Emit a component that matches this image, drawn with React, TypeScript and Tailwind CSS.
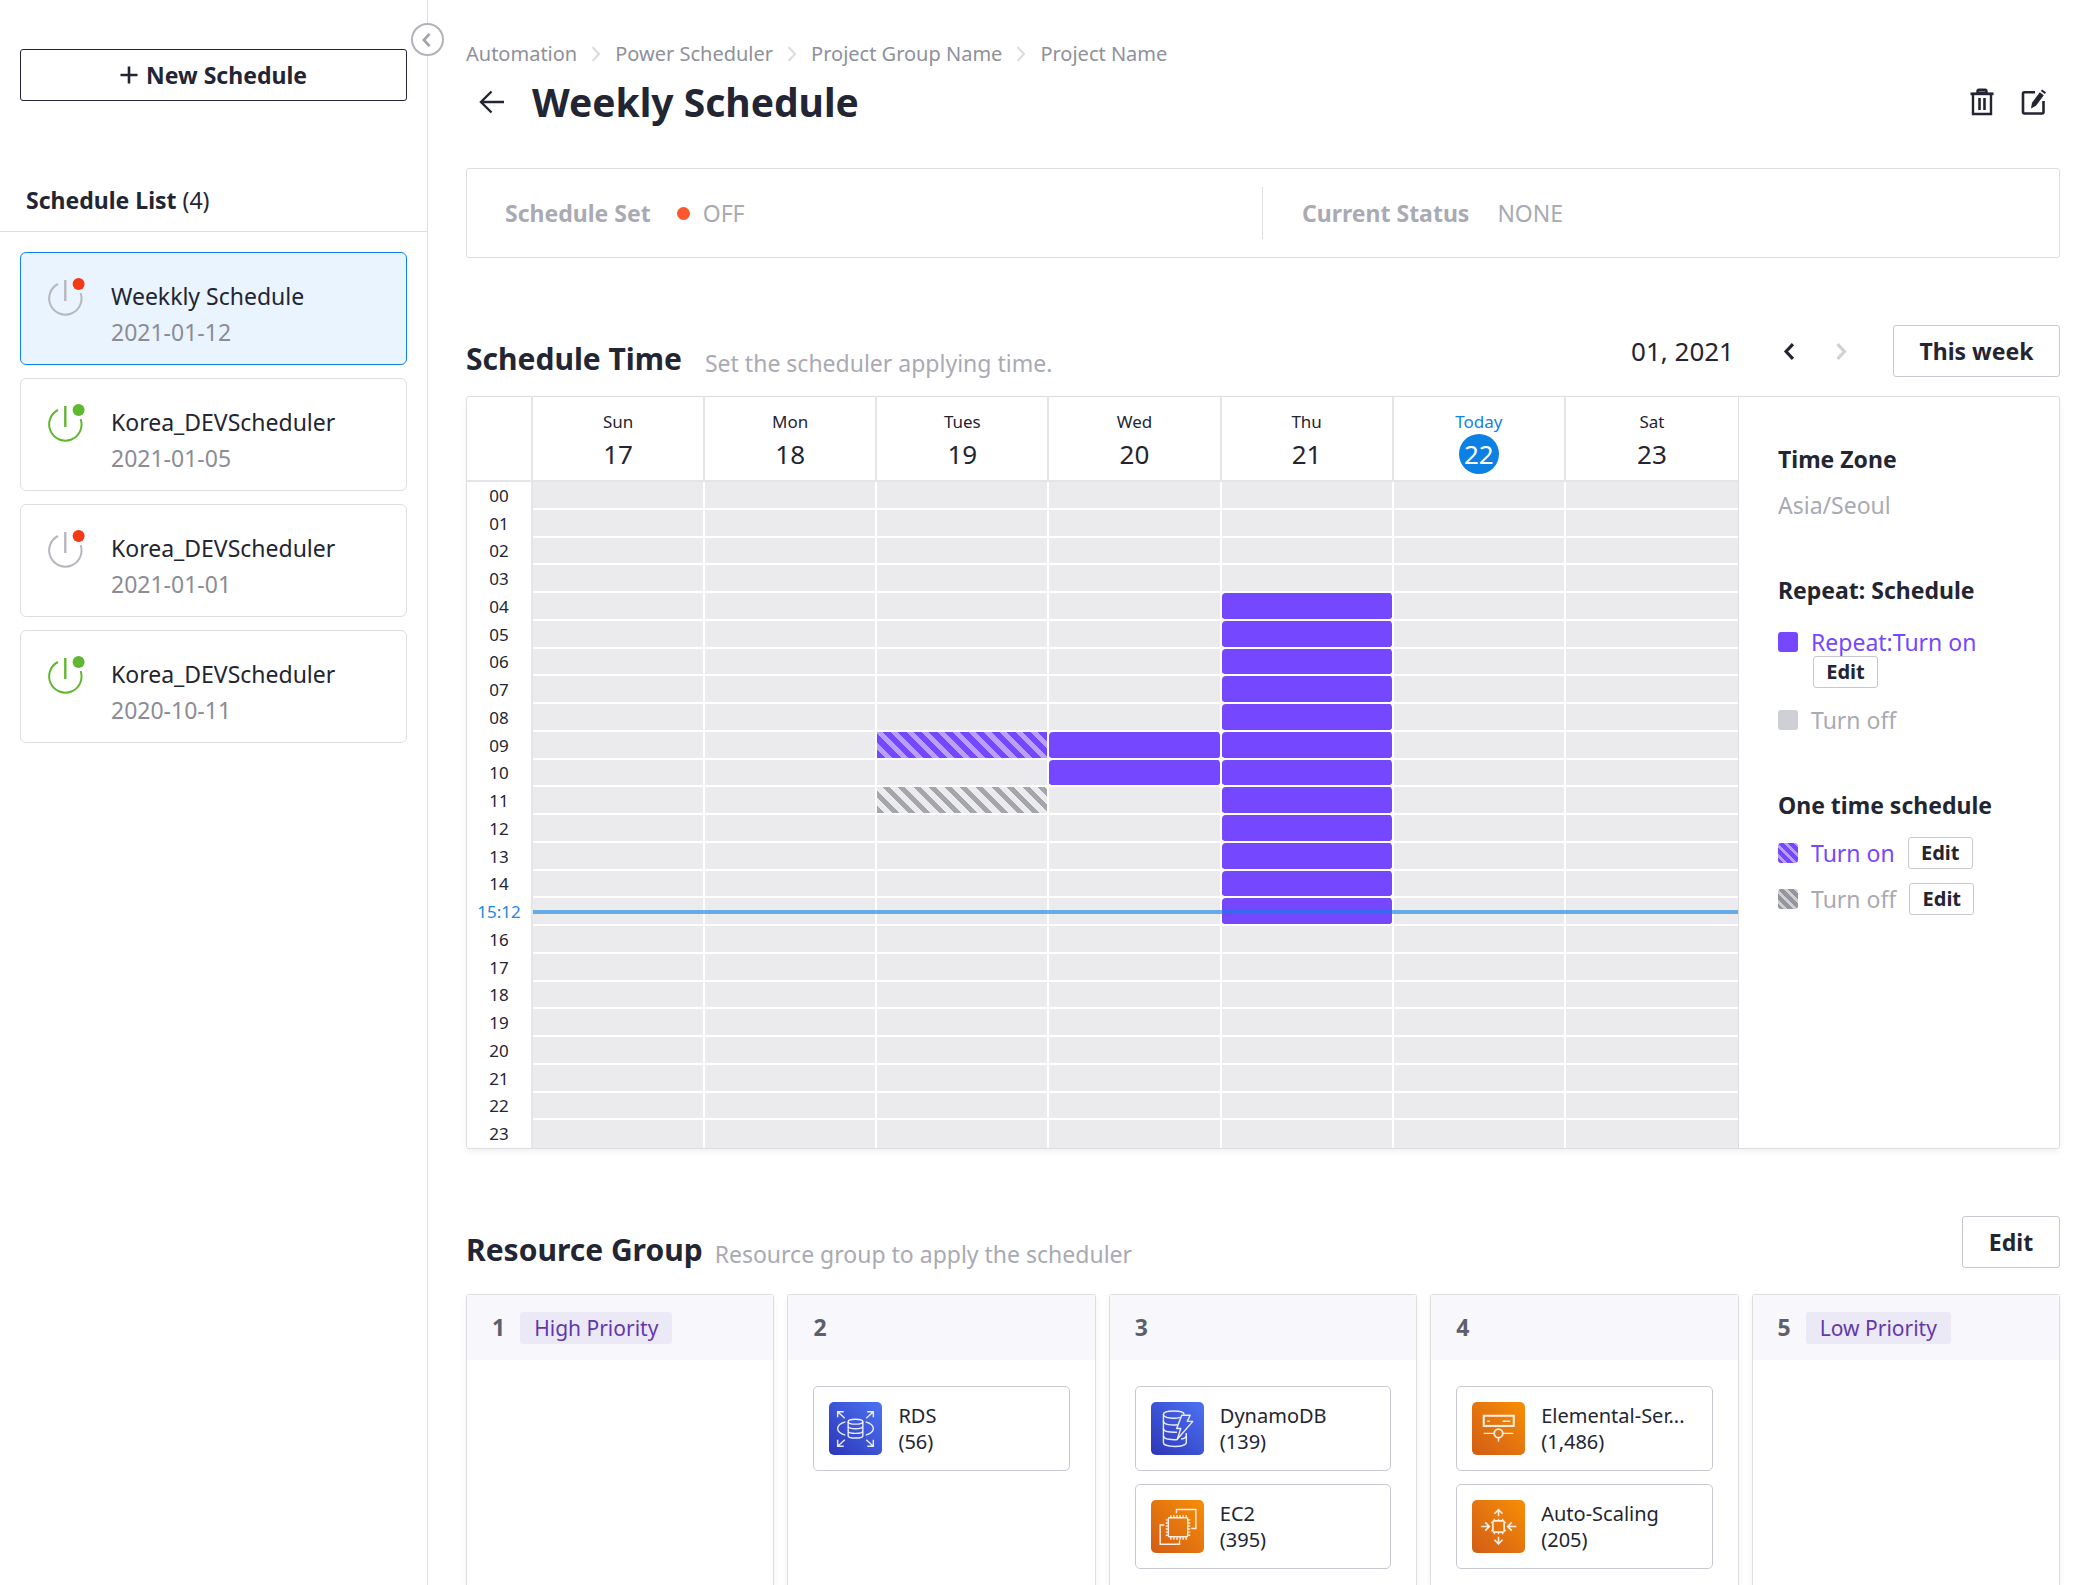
import { ReactNode } from "react";

type Power = "on" | "off";

const schedules: { name: string; date: string; power: Power; selected?: boolean }[] = [
  { name: "Weekkly Schedule", date: "2021-01-12", power: "off", selected: true },
  { name: "Korea_DEVScheduler", date: "2021-01-05", power: "on" },
  { name: "Korea_DEVScheduler", date: "2021-01-01", power: "off" },
  { name: "Korea_DEVScheduler", date: "2020-10-11", power: "on" },
];

const crumbs = ["Automation", "Power Scheduler", "Project Group Name", "Project Name"];

const days = [
  { name: "Sun", date: 17 },
  { name: "Mon", date: 18 },
  { name: "Tues", date: 19 },
  { name: "Wed", date: 20 },
  { name: "Thu", date: 21 },
  { name: "Today", date: 22, today: true },
  { name: "Sat", date: 23 },
];

const hours = Array.from({ length: 24 }, (_, h) => h);
const nowHour = 15;

const purpleStripes =
  "bg-[repeating-linear-gradient(45deg,#7547ff_0px,#7547ff_6px,#b8a0ff_6px,#b8a0ff_11px)]";
const grayStripes =
  "bg-[repeating-linear-gradient(45deg,#a5a6ac_0px,#a5a6ac_5px,#ebebed_5px,#ebebed_11px)]";

function slotStyle(day: number, hour: number) {
  if (day === 4 && hour >= 4 && hour <= 15) return "bg-[#7547ff] rounded-sm";
  if (day === 3 && (hour === 9 || hour === 10)) return "bg-[#7547ff] rounded-sm";
  if (day === 2 && hour === 9) return purpleStripes;
  if (day === 2 && hour === 11) return grayStripes;
  return "bg-[#ebebed]";
}

function PowerIcon({ power }: { power: Power }) {
  const on = power === "on";
  const line = on ? "#60b731" : "#b6b7be";
  return (
    <svg width="40" height="40" viewBox="0 0 40 40" fill="none" aria-hidden="true" className="shrink-0">
      <path d="M12 6 A16.2 16.2 0 1 0 34.6 15" stroke={line} strokeWidth="2" />
      <path d="M19.3 2V23" stroke={line} strokeWidth="2.4" />
      <circle cx="32.6" cy="6" r="6" fill={on ? "#60b731" : "#f23a16"} />
    </svg>
  );
}

function Chevron({ dir, size, color, weight }: { dir: "left" | "right"; size: number; color: string; weight: number }) {
  return (
    <svg width={size / 2} height={size} viewBox="0 0 8 16" fill="none" aria-hidden="true" className="overflow-visible">
      <path
        d={dir === "left" ? "M7.5 1 L1 8 L7.5 15" : "M0.5 1 L7 8 L0.5 15"}
        stroke={color}
        strokeWidth={weight}
      />
    </svg>
  );
}

function Tile({ hue, children }: { hue: "blue" | "orange"; children: ReactNode }) {
  return (
    <span
      className={
        "size-[53px] shrink-0 overflow-hidden rounded-[5px] bg-linear-45 " +
        (hue === "blue" ? "from-[#2e35b8] to-[#4d72f3]" : "from-[#d25c14] to-[#f78e04]")
      }
    >
      <svg viewBox="0 0 52 52" fill="none" stroke="#fff" strokeOpacity="0.88" strokeWidth="1.4" aria-hidden="true">
        {children}
      </svg>
    </span>
  );
}

const RdsIcon = () => (
  <Tile hue="blue">
    <path d="M8.5 15V9.5H14.5M8.5 9.5L15.5 16M37.5 9.5H43.5V15M43.5 9.5L36.5 16M8.5 37V43.5H14.5M8.5 43.5L15.5 37M37.5 43.5H43.5V37M43.5 43.5L36.5 37" />
    <path d="M16 19.5C11 21 8.5 23.5 8.5 26C8.5 28.5 11 31 16 32.5M36 19.5C41 21 43.5 23.5 43.5 26C43.5 28.5 41 31 36 32.5" />
    <ellipse cx="26" cy="19.3" rx="7.2" ry="2.4" />
    <path d="M18.8 19.3V33C18.8 36.2 33.2 36.2 33.2 33V19.3M18.8 23.8C18.8 27 33.2 27 33.2 23.8M18.8 28.4C18.8 31.6 33.2 31.6 33.2 28.4" />
  </Tile>
);

const DynamoIcon = () => (
  <Tile hue="blue">
    <path d="M32.5 12.2C32.5 7.8 12.2 7.8 12.2 12.2C12.2 16.4 25 16.4 28.5 15" />
    <path d="M12.2 12.2V40C12.2 44.8 34.6 44.8 34.6 40V30.5" />
    <path d="M12.2 19C12.2 22.5 21 23 26 22.3M12.2 26C12.2 29.5 20 30 25.5 29.6M12.2 33C12.2 37 22 37.2 26 36.8M29.5 36.3C33 35.6 34.6 34.6 34.6 33" />
    <path d="M30.2 13H38.5L35.6 19H41L25.8 36.6L29.2 26H25.2Z" strokeLinejoin="round" />
  </Tile>
);

const Ec2Icon = () => (
  <Tile hue="orange">
    <path d="M25 13V9.3H44V28H39.5M13 24.5H9V43.5H28V39.5" />
    <rect x="17" y="17.5" width="19" height="18.5" rx="1" />
    <path d="M19.5 15V17M22.5 15V17M25.5 15V17M28.5 15V17M31.5 15V17M34.5 15V17M19.5 36.5V39M22.5 36.5V39M25.5 36.5V39M28.5 36.5V39M31.5 36.5V39M34.5 36.5V39M14.5 19.5H16.5M14.5 22.5H16.5M14.5 25.5H16.5M14.5 28.5H16.5M14.5 31.5H16.5M14.5 34.5H16.5M36.5 19.5H38.5M36.5 22.5H38.5M36.5 25.5H38.5M36.5 28.5H38.5M36.5 31.5H38.5M36.5 34.5H38.5" />
  </Tile>
);

const ElementalIcon = () => (
  <Tile hue="orange">
    <rect x="11.5" y="13.5" width="29.5" height="10" strokeWidth="2" />
    <path d="M15 18.8H17.5M30 18.8H37.5" />
    <path d="M11.5 30.8H21.5M30.5 30.8H40.5M26 35.3V39" />
    <circle cx="26" cy="30.8" r="4.2" strokeWidth="1.8" />
  </Tile>
);

const AutoScalingIcon = () => (
  <Tile hue="orange">
    <rect x="20.5" y="20.5" width="11" height="11" rx="1" strokeWidth="1.6" />
    <path d="M22 18.5V20M26 18.5V20M30 18.5V20M22 32V33.5M26 32V33.5M30 32V33.5M18.7 22H20M32 22H33.3M18.7 30H20M32 30H33.3" />
    <path
      strokeWidth="1.6"
      d="M26 9.5V16M22 13.5L26 9.5L30 13.5M26 36V43M22 39L26 43L30 39M9 26H17M13 22L17 26L13 30M43.5 26H35M39 22L35 26L39 30"
    />
  </Tile>
);

const groups: { badge?: string; items: { name: string; count: string; icon: ReactNode }[] }[] = [
  { badge: "High Priority", items: [] },
  { items: [{ name: "RDS", count: "(56)", icon: <RdsIcon /> }] },
  {
    items: [
      { name: "DynamoDB", count: "(139)", icon: <DynamoIcon /> },
      { name: "EC2", count: "(395)", icon: <Ec2Icon /> },
    ],
  },
  {
    items: [
      { name: "Elemental-Ser...", count: "(1,486)", icon: <ElementalIcon /> },
      { name: "Auto-Scaling", count: "(205)", icon: <AutoScalingIcon /> },
    ],
  },
  { badge: "Low Priority", items: [] },
];

function SmallEdit({ label }: { label: string }) {
  return (
    <button
      type="button"
      aria-label={label}
      className="h-8 w-[65px] rounded-[3px] border border-[#c8c9d0] bg-white text-[20px] leading-7 font-bold"
    >
      Edit
    </button>
  );
}

function Sidebar() {
  return (
    <aside className="relative w-[428px] shrink-0 border-r border-[#dedee2]">
      <button
        type="button"
        aria-label="Collapse sidebar"
        className="absolute top-[23px] -right-[17px] flex size-[33px] items-center justify-center rounded-full border-2 border-[#b2b3ba] bg-white pr-0.5"
      >
        <Chevron dir="left" size={14} color="#a0a1aa" weight={3} />
      </button>
      <div className="px-5 pt-[49px]">
        <button
          type="button"
          className="flex h-[52px] w-full items-center justify-center gap-2 rounded-[3px] border border-[#232533] text-[23px] font-bold"
        >
          <svg width="18" height="18" viewBox="0 0 18 18" stroke="#232533" strokeWidth="2.6" aria-hidden="true">
            <path d="M9 0.5V17.5M0.5 9H17.5" />
          </svg>
          New Schedule
        </button>
      </div>
      <h2 className="mt-[81px] border-b border-[#dedee2] px-[26px] pb-[13px] text-[23px] leading-9 font-bold">
        Schedule List <span className="font-normal">(4)</span>
      </h2>
      <ul className="mt-5 flex flex-col gap-[13px] px-5">
        {schedules.map((s) => (
          <li key={s.date}>
            <button
              type="button"
              className={
                "flex h-[113px] w-full items-start gap-[25px] rounded-md border p-[25px] text-left text-[23px] leading-9 " +
                (s.selected ? "border-[#0f83e6] bg-[#eaf4fe]" : "border-[#dedee2] bg-white")
              }
            >
              <PowerIcon power={s.power} />
              <span className="flex flex-col">
                <span>{s.name}</span>
                <span className="text-[#8b8c98]">{s.date}</span>
              </span>
            </button>
          </li>
        ))}
      </ul>
    </aside>
  );
}

function WeekTable() {
  return (
    <div className="min-w-0 flex-1">
      <table className="h-[751px] w-full table-fixed border-separate border-spacing-0">
        <thead>
          <tr>
            <td className="h-[85px] w-[66px] border-r-2 border-b-2 border-[#e5e5e8]" />
            {days.map((d, i) => (
              <th
                key={d.date}
                scope="col"
                className={
                  "h-[85px] border-b-2 border-[#e5e5e8] p-0 text-center align-top font-normal " +
                  (i < days.length - 1 ? "border-r-2" : "")
                }
              >
                <div className={"flex flex-col items-center pt-[13px] " + (d.today ? "text-[#0f83e6]" : "")}>
                  <span className="text-[17px] leading-6">{d.name}</span>
                  <span
                    className={
                      "flex size-10 items-center justify-center rounded-full text-[26px] " +
                      (d.today ? "bg-[#0d80e4] text-white" : "")
                    }
                  >
                    {d.date}
                  </span>
                </div>
              </th>
            ))}
          </tr>
        </thead>
        <tbody>
          {hours.map((h) => (
            <tr key={h} className="relative">
              <th
                scope="row"
                className={
                  "border-r-2 border-[#e5e5e8] p-0 text-center text-[17px] leading-6 font-normal " +
                  (h === nowHour ? "text-[#1c87e5]" : "")
                }
              >
                {h === nowHour ? "15:12" : String(h).padStart(2, "0")}
                {h === nowHour && (
                  <span className="absolute top-1/2 right-0 left-[66px] z-10 -mt-0.5 h-1 bg-[#0d80e4]/60" />
                )}
              </th>
              {days.map((d, i) => (
                <td
                  key={d.date}
                  className={
                    "border-white bg-clip-padding p-0 " +
                    (i < days.length - 1 ? "border-r-2 " : "") +
                    (h < 23 ? "border-b-2 " : "") +
                    slotStyle(i, h)
                  }
                />
              ))}
            </tr>
          ))}
        </tbody>
      </table>
    </div>
  );
}

function Legend() {
  return (
    <div className="w-[321px] shrink-0 border-l border-[#dedee2] pt-[46px] pl-[39px] text-[23px] leading-8">
      <h3 className="font-bold">Time Zone</h3>
      <p className="mt-3.5 text-[#a9aab3]">Asia/Seoul</p>
      <h3 className="mt-[53px] font-bold">Repeat: Schedule</h3>
      <div className="mt-[22px] flex gap-[13px] leading-7">
        <span className="mt-1 size-5 rounded-[3px] bg-[#7547ff]" />
        <div>
          <p className="text-[#7547ff]">Repeat:Turn on</p>
          <div className="flex pl-0.5">
            <SmallEdit label="Edit repeat turn on" />
          </div>
        </div>
      </div>
      <div className="mt-[18px] flex items-center gap-[13px] leading-7">
        <span className="size-5 rounded-[3px] bg-[#cfd0d6]" />
        <span className="text-[#a9aab3]">Turn off</span>
      </div>
      <h3 className="mt-[55px] font-bold">One time schedule</h3>
      <div className="mt-4 flex items-center gap-[13px]">
        <span className="size-5 rounded-[3px] bg-[repeating-linear-gradient(45deg,#7547ff_0px,#7547ff_4px,#b8a0ff_4px,#b8a0ff_7px)]" />
        <span className="text-[#7547ff]">Turn on</span>
        <SmallEdit label="Edit one time turn on" />
      </div>
      <div className="mt-3.5 flex items-center gap-[13px]">
        <span className="size-5 rounded-[3px] bg-[repeating-linear-gradient(45deg,#95969c_0px,#95969c_4px,#cfd0d6_4px,#cfd0d6_7px)]" />
        <span className="text-[#a9aab3]">Turn off</span>
        <SmallEdit label="Edit one time turn off" />
      </div>
    </div>
  );
}

export default function App() {
  return (
    <div className="flex min-h-screen bg-white font-['Noto_Sans',sans-serif] text-[#232533]">
      <Sidebar />
      <main className="flex min-w-0 flex-1 flex-col pt-10 pr-10 pl-[38px]">
        <nav aria-label="Breadcrumb">
          <ol className="flex items-center text-[20px] leading-7 text-[#8f909b]">
            {crumbs.map((c, i) => (
              <li key={c} className="flex items-center">
                {i > 0 && (
                  <span className="mx-[15px]">
                    <Chevron dir="right" size={16} color="#dcdce0" weight={2} />
                  </span>
                )}
                <a href="#">{c}</a>
              </li>
            ))}
          </ol>
        </nav>

        <header className="mt-2 flex h-[52px] items-center">
          <button type="button" aria-label="Back" className="ml-3 flex size-7 items-center justify-center">
            <svg width="26" height="24" viewBox="0 0 26 24" fill="none" stroke="#232533" strokeWidth="2.4" aria-hidden="true">
              <path d="M25 12H2.5M12.5 1.5L2 12L12.5 22.5" />
            </svg>
          </button>
          <h1 className="ml-[26px] text-[39px] leading-[52px] font-bold">Weekly Schedule</h1>
          <div className="mr-3 ml-auto flex items-center gap-6">
            <button type="button" aria-label="Delete">
              <svg width="28" height="28" viewBox="0 0 28 28" fill="none" stroke="#232533" strokeWidth="2.4" aria-hidden="true">
                <path d="M9.5 5V3.2C9.5 2.3 10 1.8 11 1.8H17C18 1.8 18.5 2.3 18.5 3.2V5Z" fill="#8a8b93" />
                <path d="M2.5 5.8H25.5" strokeWidth="2.8" />
                <path d="M5 6V26H23V6" />
                <path d="M11.5 10V22M16.5 10V22" strokeWidth="2.6" />
              </svg>
            </button>
            <button type="button" aria-label="Edit schedule">
              <svg width="28" height="28" viewBox="0 0 28 28" fill="none" aria-hidden="true">
                <path
                  d="M15 4.2H4.5C3.6 4.2 3 4.8 3 5.7V24C3 24.9 3.6 25.5 4.5 25.5H22C22.9 25.5 23.5 24.9 23.5 24V13"
                  stroke="#232533"
                  strokeWidth="2.6"
                />
                <path d="M11 20.5L12 14.8L19.8 4.3L23.8 7.2L16 17.8Z" fill="#232533" />
                <path d="M20.8 3L22 1.4L26 4.3L24.8 6Z" fill="#232533" />
              </svg>
            </button>
          </div>
        </header>

        <section className="mt-10 flex h-[90px] items-center rounded-[3px] border border-[#dedee2] text-[23px] text-[#a9aab3]">
          <div className="flex flex-1 items-center pl-[38px]">
            <strong className="font-bold">Schedule Set</strong>
            <span className="ml-[26px] size-[13px] rounded-full bg-[#f9572c]" />
            <span className="ml-[13px]">OFF</span>
          </div>
          <div className="flex h-[52px] flex-1 items-center border-l border-[#dedee2] pl-[39px]">
            <strong className="font-bold">Current Status</strong>
            <span className="ml-7">NONE</span>
          </div>
        </section>

        <section className="mt-[67px]">
          <div className="flex h-[52px] items-center">
            <div className="flex items-end self-end">
              <h2 className="text-[30px] leading-9 font-bold">Schedule Time</h2>
              <p className="ml-[23px] text-[23px] leading-7 text-[#a9aab3]">Set the scheduler applying time.</p>
            </div>
            <span className="ml-auto text-[26px]">01, 2021</span>
            <button type="button" aria-label="Previous week" className="ml-[39px] flex size-8 items-center justify-center">
              <Chevron dir="left" size={17} color="#232533" weight={3} />
            </button>
            <button type="button" aria-label="Next week" className="ml-5 flex size-8 items-center justify-center">
              <Chevron dir="right" size={17} color="#d0d0d6" weight={3} />
            </button>
            <button
              type="button"
              className="ml-9 h-[52px] w-[167px] rounded-[3px] border border-[#c8c9d0] text-[23px] font-bold"
            >
              This week
            </button>
          </div>
          <div className="mt-[19px] flex rounded-[3px] border border-[#dedee2] shadow-[0_3px_6px_rgba(0,0,0,0.06)]">
            <WeekTable />
            <Legend />
          </div>
        </section>

        <section className="mt-[67px] flex flex-1 flex-col">
          <div className="flex h-[52px] items-end">
            <h2 className="text-[30px] leading-9 font-bold">Resource Group</h2>
            <p className="ml-3 text-[23px] leading-7 text-[#a9aab3]">Resource group to apply the scheduler</p>
            <button
              type="button"
              className="ml-auto h-[52px] w-[98px] rounded-[3px] border border-[#c8c9d0] text-[23px] font-bold"
            >
              Edit
            </button>
          </div>
          <div className="mt-[26px] grid flex-1 grid-cols-5 gap-[13px]">
            {groups.map((g, i) => (
              <div
                key={i}
                className="rounded-t-[3px] border border-b-0 border-[#dedee2] shadow-[0_3px_6px_rgba(0,0,0,0.06)]"
              >
                <div className="flex h-[65px] items-center gap-[15px] bg-[#f7f7fc] px-[25px]">
                  <span className="text-[23px] font-bold text-[#5e5f6c]">{i + 1}</span>
                  {g.badge && (
                    <span className="rounded-[3px] bg-[#ece9f7] px-3.5 text-[21px] leading-8 text-[#6337ad]">
                      {g.badge}
                    </span>
                  )}
                </div>
                <ul className="flex flex-col gap-[13px] px-[25px] pt-[26px]">
                  {g.items.map((r) => (
                    <li
                      key={r.name}
                      className="flex h-[85px] items-center gap-4 rounded-[5px] border border-[#c8c9d0] px-[15px] text-[20px] leading-[26px]"
                    >
                      {r.icon}
                      <span className="min-w-0 whitespace-nowrap">
                        {r.name}
                        <br />
                        {r.count}
                      </span>
                    </li>
                  ))}
                </ul>
              </div>
            ))}
          </div>
        </section>
      </main>
    </div>
  );
}
